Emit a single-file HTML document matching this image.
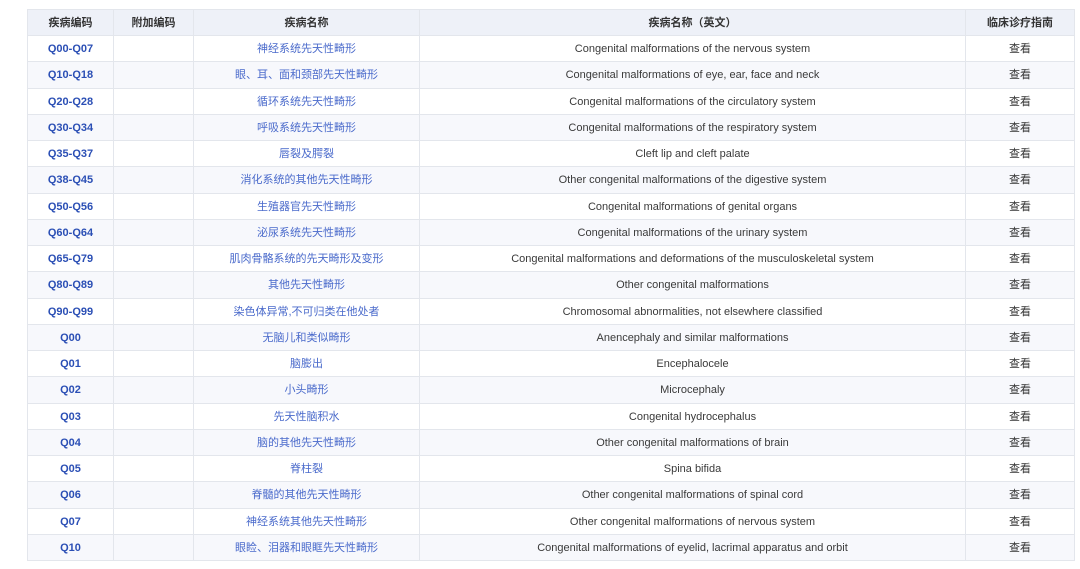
<!DOCTYPE html>
<html><head><meta charset="utf-8"><style>
html,body{margin:0;padding:0;background:#fff;width:1080px;height:569px;overflow:hidden}
table{position:absolute;left:27px;top:9px;border-collapse:collapse;table-layout:fixed;width:1047px;font-family:"Liberation Sans","Noto Sans CJK SC",sans-serif;font-size:11px}
td,th{border:1px solid #e3e6ec;text-align:center;padding:2px 0 0 0;height:23.25px;line-height:23px;white-space:nowrap;overflow:hidden}
th{background:#eef1f8;color:#333;font-weight:bold;height:23px}
tr:nth-child(odd) td{background:#f7f8fc}
td.c{color:#2b4fb5;font-weight:bold}
td.n{color:#4a6acb}
td.e{color:#3a3a3a}
td.v{color:#333}
</style></head><body>
<table>
<colgroup><col style="width:86px"><col style="width:80px"><col style="width:226px"><col style="width:546px"><col style="width:109px"></colgroup>
<tr><th>疾病编码</th><th>附加编码</th><th>疾病名称</th><th>疾病名称（英文）</th><th>临床诊疗指南</th></tr>
<tr><td class="c">Q00-Q07</td><td></td><td class="n">神经系统先天性畸形</td><td class="e">Congenital malformations of the nervous system</td><td class="v">查看</td></tr>
<tr><td class="c">Q10-Q18</td><td></td><td class="n">眼、耳、面和颈部先天性畸形</td><td class="e">Congenital malformations of eye, ear, face and neck</td><td class="v">查看</td></tr>
<tr><td class="c">Q20-Q28</td><td></td><td class="n">循环系统先天性畸形</td><td class="e">Congenital malformations of the circulatory system</td><td class="v">查看</td></tr>
<tr><td class="c">Q30-Q34</td><td></td><td class="n">呼吸系统先天性畸形</td><td class="e">Congenital malformations of the respiratory system</td><td class="v">查看</td></tr>
<tr><td class="c">Q35-Q37</td><td></td><td class="n">唇裂及腭裂</td><td class="e">Cleft lip and cleft palate</td><td class="v">查看</td></tr>
<tr><td class="c">Q38-Q45</td><td></td><td class="n">消化系统的其他先天性畸形</td><td class="e">Other congenital malformations of the digestive system</td><td class="v">查看</td></tr>
<tr><td class="c">Q50-Q56</td><td></td><td class="n">生殖器官先天性畸形</td><td class="e">Congenital malformations of genital organs</td><td class="v">查看</td></tr>
<tr><td class="c">Q60-Q64</td><td></td><td class="n">泌尿系统先天性畸形</td><td class="e">Congenital malformations of the urinary system</td><td class="v">查看</td></tr>
<tr><td class="c">Q65-Q79</td><td></td><td class="n">肌肉骨骼系统的先天畸形及变形</td><td class="e">Congenital malformations and deformations of the musculoskeletal system</td><td class="v">查看</td></tr>
<tr><td class="c">Q80-Q89</td><td></td><td class="n">其他先天性畸形</td><td class="e">Other congenital malformations</td><td class="v">查看</td></tr>
<tr><td class="c">Q90-Q99</td><td></td><td class="n">染色体异常,不可归类在他处者</td><td class="e">Chromosomal abnormalities, not elsewhere classified</td><td class="v">查看</td></tr>
<tr><td class="c">Q00</td><td></td><td class="n">无脑儿和类似畸形</td><td class="e">Anencephaly and similar malformations</td><td class="v">查看</td></tr>
<tr><td class="c">Q01</td><td></td><td class="n">脑膨出</td><td class="e">Encephalocele</td><td class="v">查看</td></tr>
<tr><td class="c">Q02</td><td></td><td class="n">小头畸形</td><td class="e">Microcephaly</td><td class="v">查看</td></tr>
<tr><td class="c">Q03</td><td></td><td class="n">先天性脑积水</td><td class="e">Congenital hydrocephalus</td><td class="v">查看</td></tr>
<tr><td class="c">Q04</td><td></td><td class="n">脑的其他先天性畸形</td><td class="e">Other congenital malformations of brain</td><td class="v">查看</td></tr>
<tr><td class="c">Q05</td><td></td><td class="n">脊柱裂</td><td class="e">Spina bifida</td><td class="v">查看</td></tr>
<tr><td class="c">Q06</td><td></td><td class="n">脊髓的其他先天性畸形</td><td class="e">Other congenital malformations of spinal cord</td><td class="v">查看</td></tr>
<tr><td class="c">Q07</td><td></td><td class="n">神经系统其他先天性畸形</td><td class="e">Other congenital malformations of nervous system</td><td class="v">查看</td></tr>
<tr><td class="c">Q10</td><td></td><td class="n">眼睑、泪器和眼眶先天性畸形</td><td class="e">Congenital malformations of eyelid, lacrimal apparatus and orbit</td><td class="v">查看</td></tr>
</table>
</body></html>
